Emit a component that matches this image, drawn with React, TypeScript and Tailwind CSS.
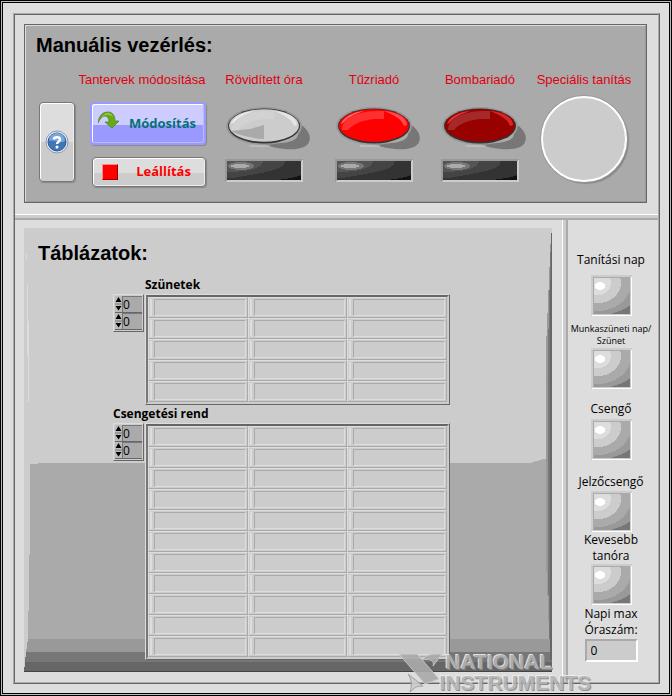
import React from "react";

const sans = "font-['Liberation_Sans',Arial,sans-serif]";

function OvalButton({ id, label, base, light, glow }: { id: string; label: string; base: string; light: string; glow: string }) {
  return (
    <div className="flex flex-col items-center">
      <span id={id} className={`${sans} h-4 text-[13px] leading-4 whitespace-nowrap text-[#e00010]`}>{label}</span>
      <button type="button" aria-labelledby={id} className="mt-[17px] block">
        <svg width="96" height="46" viewBox="0 0 96 46" className="block">
          <path d="M78 17 C92 20 100 36 88 42 C76 47 58 43 46 39 Z" fill="#777" />
          <ellipse cx="48" cy="21" rx="38" ry="19" fill="#999" />
          <path d="M80 24 C86 32 78 38 62 38 L54 36 Z" fill="#aaa" />
          <path d="M34 41 h20" stroke="#ccc" strokeWidth="1" />
          <ellipse cx="48" cy="21" rx="36" ry="17.500" fill="#333" />
          <ellipse cx="48" cy="20.500" rx="35" ry="16.300" fill={base} />
          <path d="M16 25 C16 10 38 5 58 6 L58 14 H48 C38 15 28 18 22 25 Z" fill={light} opacity=".7" />
          <path d="M15 19 C18 11 28 7 38 6 C28 9 21 13 17 18 Z" fill={glow} />
          <path d="M58 6 C72 7 81 13 81 20 L78 21 C76 14 68 10 58 6 Z" fill={glow} opacity=".75" />
          {id === "short" && <path d="M15 26 L34 24 L48 20 V34 C36 33 24 31 15 26 Z" fill="#aaa" />}
        </svg>
      </button>
      <svg role="img" aria-label="Jelző" width="78" height="23" viewBox="0 0 78 23" className="mt-2 block" shapeRendering="crispEdges">
        <path d="M0 0 H78 L76 2 H2 V21 L0 23Z" fill="#999" />
        <path d="M78 0 V23 H0 L2 21 H76 V2Z" fill="#ccc" />
        <rect x="2" y="2" width="74" height="19" fill="#333" />
        <path d="M2 2 H60 C60 12 34 14 8 19 H2 Z" fill="#444" />
        <path d="M2 2 H38 C38 9 24 13 2 13 Z" fill="#555" />
        <ellipse cx="16" cy="7" rx="13" ry="4" fill="#777" />
        <ellipse cx="15" cy="7" rx="9" ry="2" fill="#aaa" />
        <path d="M76 16 V21 H50 Q66 20 76 16Z" fill="#111" />
      </svg>
    </div>
  );
}

function Lamp({ label }: { label: string }) {
  return (
    <svg role="img" aria-label={label} width="41" height="41" viewBox="0 0 41 41" className="block" shapeRendering="crispEdges">
      <rect width="41" height="41" fill="#ccc" />
      <path d="M1 41 V40 H40 V2 H41 V41Z" fill="#fff" />
      <svg x="2" y="2" width="37" height="37" viewBox="2 2 37 37">
        <rect x="2" y="2" width="37" height="37" fill="#777" />
        <ellipse cx="7" cy="8" rx="45" ry="32" fill="#999" />
        <ellipse cx="7" cy="8" rx="33" ry="28" fill="#aaa" />
        <ellipse cx="7" cy="8" rx="23" ry="20" fill="#ccc" />
        <ellipse cx="7" cy="8" rx="13" ry="12" fill="#ddd" />
        <path d="M2 39 V2 H39 V3 H3 V39Z" fill="#aaa" />
        <ellipse cx="9" cy="11" rx="5" ry="4" fill="#fff" />
      </svg>
    </svg>
  );
}

function IndexBox({ name }: { name: string }) {
  return (
    <div className="mr-px w-[31px] shrink-0 self-start border border-t-[#ddd] border-r-[#666] border-b-[#666] border-l-[#ddd] bg-[#ccc] p-px">
      {["sor", "oszlop"].map((part) => (
        <div key={part} className="flex h-[17px] border-b border-[#666]">
          <svg width="7" height="16" viewBox="0 0 7 16" className="shrink-0" aria-hidden="true">
            <rect width="7" height="16" fill="#bbb" />
            <path d="M0 8 H7" stroke="#777" />
            <path d="M3.500 1 L6.500 6 H.5Z M3.500 14.500 L6.500 10 H.5Z" fill="#000" />
          </svg>
          <input aria-label={`${name} ${part}`} defaultValue="0" className="h-4 w-full min-w-0 border-t border-l border-[#777] bg-[#aaa] text-xs leading-4 text-black outline-none" />
        </div>
      ))}
    </div>
  );
}

function Grid({ name, rows }: { name: string; rows: number }) {
  return (
    <div className="flex">
      <IndexBox name={name} />
      <div className="min-w-0 flex-1 border border-t-[#ddd] border-r-[#666] border-b-[#666] border-l-[#ddd]">
        <div className="border-2 border-t-[#666] border-r-[#ccc] border-b-[#ccc] border-l-[#777]">
          <table aria-label={name} className="w-full table-fixed border-collapse bg-[#ccc]">
            <tbody>
              {Array.from({ length: rows }, (_, r) => (
                <tr key={r}>
                  {[1, 2, 3].map((c) => (
                    <td key={c} className="h-[21px] p-0">
                      <div className="flex h-[21px] gap-0.5 border border-t-[#ddd] border-r-[#aaa] border-b-[#aaa] border-l-[#ddd] p-px">
                        <span className="w-0.5 bg-[#ddd]" />
                        <input aria-label={`${name} ${r + 1}. sor ${c}. oszlop`} className="h-[17px] min-w-0 flex-1 border border-t-[#aaa] border-r-[#ddd] border-b-[#ddd] border-l-[#aaa] bg-[#ccc] px-1 text-xs outline-none" />
                      </div>
                    </td>
                  ))}
                </tr>
              ))}
            </tbody>
          </table>
        </div>
      </div>
    </div>
  );
}

export default function App() {
  return (
    <main className="border border-black bg-[#ddd] font-['Open_Sans','Noto_Sans',sans-serif] text-xs text-black">
      <div className="border border-[#bbb]">
        <div className="relative border border-black pt-2.5 pr-[9px] pb-[9px] pl-2.5">
          <div className="border border-t-[#aaa] border-r-[#666] border-b-[#666] border-l-[#aaa]">
            <div className="border border-t-[#666] border-r-[#aaa] border-b-[#aaa] border-l-[#666]">
              <section className="mt-[9px] mr-[11px] mb-[11px] ml-[9px] border border-[#666]">
                <div className="border border-t-[#ddd] border-r-[#999] border-b-[#999] border-l-[#ddd] bg-[#aaa] pt-[7px] pr-2 pb-3.5 pl-[13px]">
                  <h1 className={`${sans} -ml-[3px] text-[20px] leading-6 font-bold`}>Manuális vezérlés:</h1>
                  <div className="mt-[15px] grid grid-cols-[36px_134fr_110fr_110fr_102fr_106fr]">
                    <button type="button" aria-label="Súgó" className="mt-[30px] flex h-20 items-center justify-center rounded border border-[#777] bg-[linear-gradient(#ddd_50%,#ccc_50%)] shadow-[1px_1px_1px_#888,inset_1px_1px_0_#fff,inset_-1px_0_0_#eee]">
                      <svg width="24" height="24" viewBox="0 0 24 24" aria-hidden="true">
                        <circle cx="12" cy="12" r="11" fill="#e8eef6" stroke="#8798b5" />
                        <circle cx="12" cy="12" r="9" fill="#4375b6" stroke="#2c568f" />
                        <path d="M4 11 A8 8 0 0 1 20 11 C15 14 10 9 4 11Z" fill="#7ca7d9" />
                        <path d="M9 9.500 C9 6.500 15 6.500 15 9.500 C15 12 12 11.500 12 14" fill="none" stroke="#fff" strokeWidth="2.400" />
                        <circle cx="12" cy="17" r="1.500" fill="#fff" />
                      </svg>
                    </button>
                    <div className="flex flex-col items-center">
                      <span className={`${sans} text-[13px] leading-4 whitespace-nowrap text-[#e00010]`}>Tantervek módosítása</span>
                      <div className="mt-3.5 ml-3 flex flex-col items-end gap-3">
                        <button type="button" className="flex h-[43px] w-[116px] items-center rounded border-2 border-[#99f] bg-[linear-gradient(#ccf_55%,#99f_55%)] pr-2 pl-1.5 text-[13px] font-bold text-[#067078] shadow-[1px_1px_1px_#888,inset_1px_1px_0_#fff,inset_-1px_-1px_0_#bbf]">
                          <svg width="22" height="19" viewBox="0 0 22 19" aria-hidden="true" className="mb-1.5 shrink-0">
                            <path d="M0 12 C1 4 5 1 10 1 C15 1 17 5 17 10 H21 L14 17 L7 11 H11 C11 7 9 5 7 5 C4 5 2 8 0 12Z" fill="#66aa15" stroke="#4b850d" strokeWidth=".7" />
                            <path d="M3 7 C6 2 12 0 15 6 C12 3 7 2 3 7Z" fill="#a4d45c" />
                          </svg>
                          <span className="flex-1 text-right">Módosítás</span>
                        </button>
                        <button type="button" className="flex h-[30px] w-[114px] items-center rounded border border-[#777] bg-[linear-gradient(#ddd_55%,#ccc_55%)] pl-[9px] text-[13px] font-bold text-[#f00] shadow-[1px_1px_1px_#888,inset_1px_1px_0_#fff,inset_-1px_-1px_0_#eee]">
                          <span className="size-4 shrink-0 border border-t-[#f88] border-r-[#900] border-b-[#900] border-l-[#f88] bg-[#f00]" />
                          <span className="flex-1 pl-1 text-center">Leállítás</span>
                        </button>
                      </div>
                    </div>
                    <OvalButton id="short" label="Rövidített óra" base="#ccc" light="#d4d4d4" glow="#eee" />
                    <OvalButton id="fire" label="Tűzriadó" base="#f00" light="#ff4444" glow="#ff6666" />
                    <OvalButton id="bomb" label="Bombariadó" base="#900" light="#aa3a3a" glow="#e33" />
                    <div className="flex flex-col items-center">
                      <span id="special" className={`${sans} text-[13px] leading-4 whitespace-nowrap text-[#e00010]`}>Speciális tanítás</span>
                      <button type="button" aria-labelledby="special" className="mt-2 size-[86px] rounded-full border-2 border-white bg-[#ccc] shadow-[0_0_0_1px_#999,2px_2px_1px_#888]" />
                    </div>
                  </div>
                </div>
              </section>
              <div className="border-t border-b-2 border-t-white border-b-[#aaa] bg-[#ccc] pt-[3px]" />
              <div className="flex">
                <div className="min-w-0 flex-1 pt-2 pr-2.5 pb-2.5 pl-[9px]">
                  <section className="relative isolate bg-[#ccc] pt-[13px] pb-3">
                    <svg className="absolute inset-0 -z-10 size-full" viewBox="0 0 528 444" preserveAspectRatio="none" shapeRendering="crispEdges" aria-hidden="true">
                      <path d="M6 236 L21 235 H506 L520 231 H526 V411 H4 L6 300Z" fill="#aaa" />
                      <path d="M4 411 H526 V424 H2Z" fill="#999" />
                      <path d="M2 424 H528 V434 H1Z" fill="#777" />
                      <path d="M1 434 H528 V444 H0Z" fill="#666" />
                      <path d="M0 443.500 H528" stroke="#444" />
                      <path d="M527 5 L522 120 V330 L526 430 H528 V5Z" fill="#999" />
                      <path d="M527 5 L524 120 V345 L526 432 H528 V5Z" fill="#777" />
                      <path d="M527 5 L525.500 150 V432 H528 V5Z" fill="#666" />
                      <path d="M2.500 26 V32 M3.500 57 V127 M4.500 93 V174" stroke="#ddd" />
                    </svg>
                    <h2 className={`${sans} pl-3.5 text-[20px] leading-6 font-bold`}>Táblázatok:</h2>
                    <div className="mt-3 pr-[102px] pl-[89px]">
                      <h3 className="mb-px pl-8 text-xs leading-4 font-bold">Szünetek</h3>
                      <Grid name="Szünetek" rows={5} />
                      <h3 className="mt-px mb-px text-xs leading-4 font-bold">Csengetési rend</h3>
                      <Grid name="Csengetési rend" rows={11} />
                    </div>
                  </section>
                </div>
                <div className="border-r-2 border-l border-r-[#aaa] border-l-white bg-[#ccc] pl-[3px]" />
                <aside className="flex w-[90px] shrink-0 flex-col items-center pt-8 pr-1 text-center text-xs leading-4">
                  <p className="mb-[7px]">Tanítási nap</p>
                  <Lamp label="Tanítási nap" />
                  <p className="mt-[7px] mb-px text-[9px] leading-3 whitespace-nowrap">Munkaszüneti nap/<br />Szünet</p>
                  <Lamp label="Munkaszüneti nap/Szünet" />
                  <p className="mt-3 mb-0.5">Csengő</p>
                  <Lamp label="Csengő" />
                  <p className="mt-3.5 mb-px">Jelzőcsengő</p>
                  <Lamp label="Jelzőcsengő" />
                  <p>Kevesebb<br />tanóra</p>
                  <Lamp label="Kevesebb tanóra" />
                  <label htmlFor="max" className="mt-px mb-px">Napi max<br />Óraszám:</label>
                  <input id="max" defaultValue="0" className="h-[23px] w-[53px] border-2 border-t-[#aaa] border-r-white border-b-white border-l-[#aaa] bg-[#ccc] px-1 text-xs outline-none" />
                </aside>
              </div>
            </div>
          </div>
          <div className={`${sans} pointer-events-none absolute right-[78px] bottom-0 flex items-end text-[21px] leading-[21px] font-bold text-[#b4b4b4] opacity-90 [text-shadow:1px_1px_0_#888,-1px_-1px_0_#eee]`}>
            <svg width="44" height="40" viewBox="0 0 44 40" className="-mr-1" aria-hidden="true">
              <path d="M0 1 H18 L40 26 L26 31Z" fill="#aaa" stroke="#ccc" />
              <path d="M23 7 C29 0 34 1 43 1 L34 13 C36 8 31 5 23 7Z" fill="#aaa" stroke="#ccc" />
              <path d="M9 21 L24 33 C16 33 16 35 11 39 C13 33 13 27 9 21Z" fill="#ccc" stroke="#999" />
            </svg>
            <div>
              <div className="pl-1.5">NATIONAL</div>
              <div>INSTRUMENTS</div>
            </div>
          </div>
        </div>
      </div>
    </main>
  );
}
